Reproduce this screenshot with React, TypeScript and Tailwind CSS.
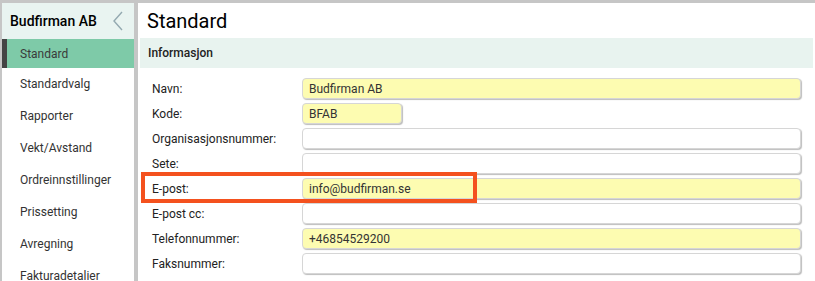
import React from "react";

const menu = [
  "Standard",
  "Standardvalg",
  "Rapporter",
  "Vekt/Avstand",
  "Ordreinnstillinger",
  "Prissetting",
  "Avregning",
  "Fakturadetalier",
];

type Field = { label: string; value?: string; required?: boolean; short?: boolean };

const fields: Field[] = [
  { label: "Navn:", value: "Budfirman AB", required: true },
  { label: "Kode:", value: "BFAB", required: true, short: true },
  { label: "Organisasjonsnummer:" },
  { label: "Sete:" },
  { label: "E-post:", value: "info@budfirman.se", required: true },
  { label: "E-post cc:" },
  { label: "Telefonnummer:", value: "+46854529200", required: true },
  { label: "Faksnummer:" },
];

function Sidebar() {
  return (
    <aside className="w-[132px] shrink-0 bg-white flex flex-col overflow-hidden">
      <div className="h-[36px] shrink-0 bg-[#e9f4f1] flex items-center justify-between pl-[8px] pr-[10px]">
        <span className="text-[14px] font-medium text-black">Budfirman AB</span>
        <svg width="12" height="22" viewBox="0 0 12 22" fill="none">
          <path d="M10 2 L2 11 L10 20" stroke="#93a9b0" strokeWidth="1.4" />
        </svg>
      </div>
      {menu.map((item, i) =>
        i === 0 ? (
          <div
            key={item}
            className="h-[29px] shrink-0 flex items-center bg-[#7ecaa8] border-l-[5px] border-[#444444] pl-[13px] text-[12px] text-[#3a3a3a]"
          >
            {item}
          </div>
        ) : (
          <div key={item} className="h-[32px] shrink-0 flex items-center pl-[18px] text-[12px] text-[#333333]">
            {item}
          </div>
        )
      )}
    </aside>
  );
}

function FormRow({ field }: { field: Field }) {
  return (
    <div className="h-[25px] flex items-center">
      <label className="w-[150px] shrink-0 text-[12px] text-[#222222]">{field.label}</label>
      <div
        className={`h-[21px] ${field.short ? "w-[100px]" : "flex-1"} rounded-[4px] border border-[#d6d6d6] shadow-[1px_1px_1px_#bdbdbd] flex items-center px-[6px] text-[12px] text-[#333333] ${
          field.required ? "bg-[#fdfcb1]" : "bg-white"
        }`}
      >
        {field.value}
      </div>
    </div>
  );
}

export default function App() {
  return (
    <div
      className="h-[281px] w-[815px] overflow-hidden bg-[#c6c6c6] pt-[3px] pl-[2px] flex gap-[4px]"
      style={{ fontFamily: "Roboto, 'Noto Sans', sans-serif" }}
    >
      <Sidebar />
      <main className="flex-1 bg-white flex flex-col overflow-hidden">
        <div className="h-[35px] shrink-0 flex items-center pl-[9px] text-[20px] text-black">Standard</div>
        <div className="h-[30px] shrink-0 mx-[2px] bg-[#e8f3ef] flex items-center pl-[8px] text-[12px] font-medium text-[#222222]">
          Informasjon
        </div>
        <div className="relative pt-[8px] pl-[14px] pr-[14px]">
          {fields.map((f) => (
            <FormRow key={f.label} field={f} />
          ))}
          <div className="absolute left-[3px] top-[104px] w-[336px] h-[31px] border-4 border-[#f4511e]" />
        </div>
      </main>
    </div>
  );
}
